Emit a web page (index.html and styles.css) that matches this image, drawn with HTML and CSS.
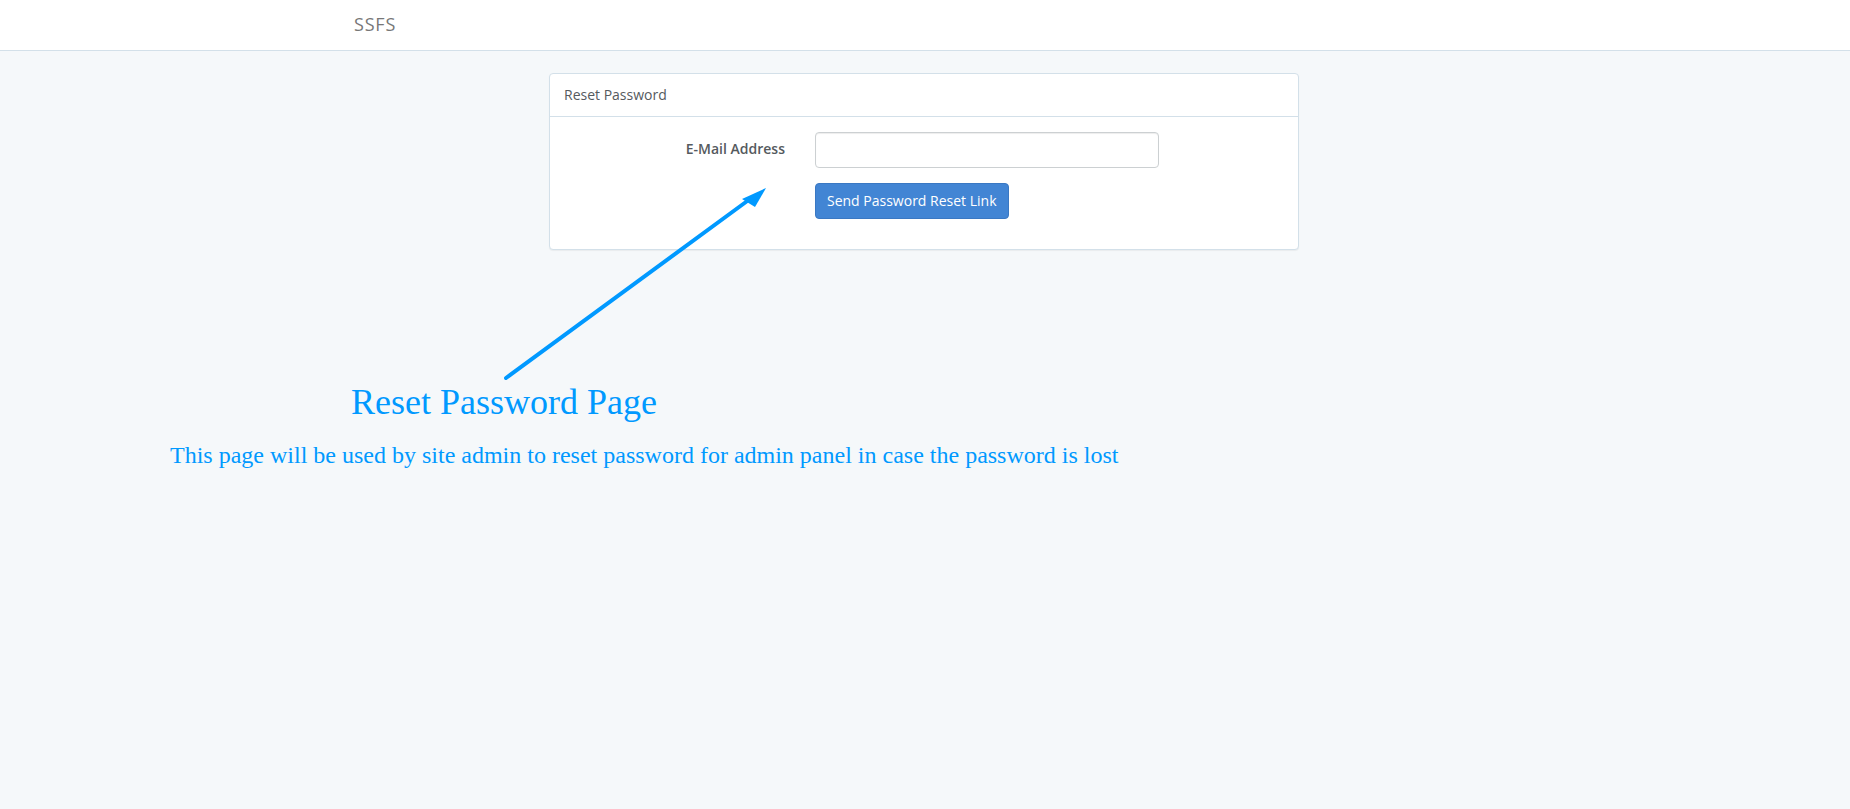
FILE: index.html
```html
<!DOCTYPE html>
<html lang="en">
<head>
<meta charset="utf-8">
<title>SSFS - Reset Password</title>
<link rel="stylesheet" href="styles.css">
</head>
<body>
<nav class="navbar">
  <div class="container">
    <a class="brand" href="#">SSFS</a>
  </div>
</nav>
<main class="container">
  <div class="col-wrap">
    <div class="panel">
      <div class="panel-heading">Reset Password</div>
      <div class="panel-body">
        <form class="form">
          <div class="form-group">
            <label class="label-col" for="email">E-Mail Address</label>
            <div class="input-col"><input id="email" class="form-control" type="email"></div>
          </div>
          <div class="form-group">
            <div class="label-col"></div>
            <div class="input-col"><button type="button" class="btn">Send Password Reset Link</button></div>
          </div>
        </form>
      </div>
    </div>
  </div>
</main>
<div class="annotation">
  <svg class="arrow" width="1850" height="809" viewBox="0 0 1850 809">
    <line x1="506" y1="378" x2="750" y2="199" stroke="#0099ff" stroke-width="4" stroke-linecap="round"/>
    <polygon points="766,188 742,199 755,207" fill="#0099ff"/>
  </svg>
  <div class="note-title">Reset Password Page</div>
  <div class="note-text">This page will be used by site admin to reset password for admin panel in case the password is lost</div>
</div>
</body>
</html>
```
FILE: styles.css
```css
* { box-sizing: border-box; }
html, body { margin: 0; padding: 0; }
body {
  background: #f5f8fa;
  font-family: "Open Sans", Lato, sans-serif;
  font-size: 14px;
  line-height: 1.6;
  color: #636b6f;
  min-height: 809px;
  position: relative;
}
.container {
  width: 1170px;
  margin: 0 auto;
  padding: 0 15px;
}
.navbar {
  background: #fff;
  border-bottom: 1px solid #d3e0e9;
  height: 51px;
  margin-bottom: 22px;
}
.brand {
  display: inline-block;
  margin-left: -1px;
  padding: 13px 0;
  font-size: 18px;
  line-height: 22px;
  letter-spacing: 0.8px;
  color: #777;
  text-decoration: none;
}
.col-wrap {
  width: 750px;
  margin-left: 194px;
}
.panel {
  background: #fff;
  border: 1px solid #d3e0e9;
  border-radius: 4px;
  box-shadow: 0 1px 1px rgba(0,0,0,.05);
  margin-bottom: 22px;
}
.panel-heading {
  padding: 10px 15px 10px 14px;
  line-height: 22px;
  border-bottom: 1px solid #d3e0e9;
  color: #555a5e;
  border-radius: 3px 3px 0 0;
}
.panel-body { padding: 15px; }
.form-group {
  display: flex;
  margin: 0 -15px 15px;
}
.label-col {
  width: 250px;
  padding: 6px 15px 0;
  text-align: right;
  font-weight: 600;
  color: #555a5e;
  line-height: 22px;
}
.input-col {
  width: 374px;
  padding: 0 15px;
}
.form-control {
  display: block;
  width: 100%;
  height: 36px;
  padding: 6px 12px;
  border: 1px solid #ccd0d2;
  border-radius: 4px;
  background: #fff;
  box-shadow: inset 0 1px 1px rgba(0,0,0,.075);
  font: inherit;
}
.btn {
  display: inline-block;
  height: 36px;
  padding: 6px 11px;
  font: inherit;
  line-height: 22px;
  color: #fff;
  background: #4285d4;
  border: 1px solid #3a78c3;
  border-radius: 4px;
  cursor: pointer;
}
.annotation {
  position: absolute;
  left: 0;
  top: 0;
  width: 1850px;
  height: 809px;
  pointer-events: none;
  font-family: "Liberation Serif", "Times New Roman", serif;
  color: #0099ff;
}
.arrow { position: absolute; left: 0; top: 0; }
.note-title {
  position: absolute;
  left: 351px;
  top: 380px;
  font-size: 36px;
  line-height: 44px;
}
.note-text {
  position: absolute;
  left: 170px;
  top: 440px;
  font-size: 24px;
  line-height: 30px;
  white-space: nowrap;
}
```
